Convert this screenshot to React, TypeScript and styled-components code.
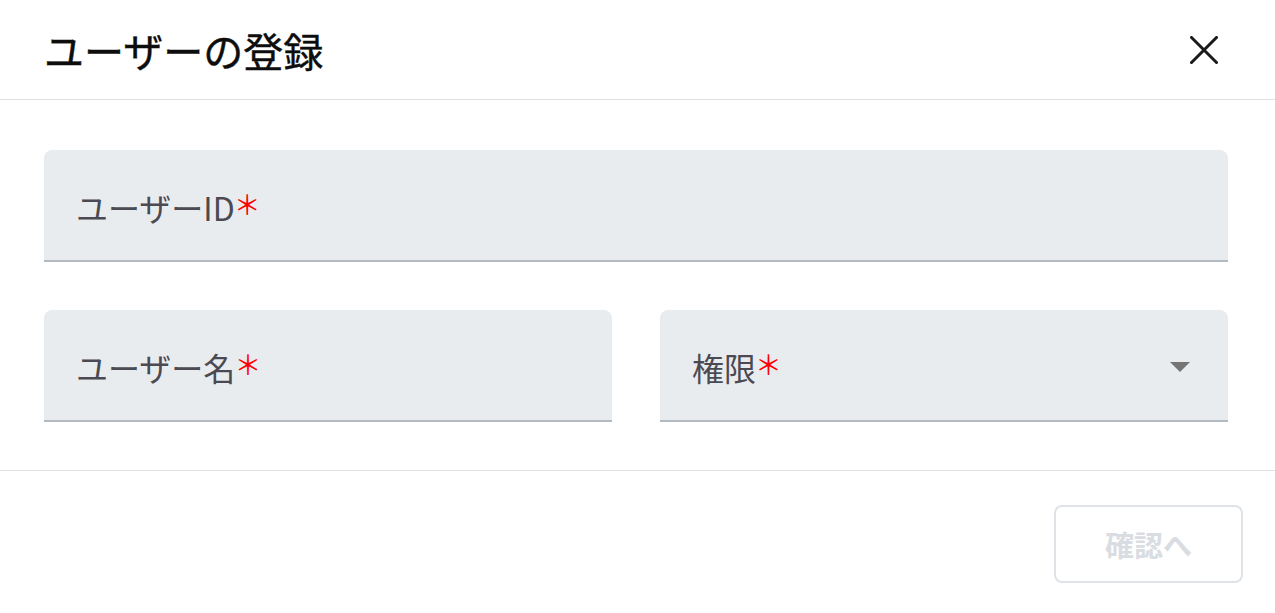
import React from "react";
import styled, { createGlobalStyle } from "styled-components";

const GlobalStyle = createGlobalStyle`
  html, body {
    margin: 0;
    padding: 0;
    background: #ffffff;
  }
  body {
    font-family: "Noto Sans CJK JP", "Noto Sans", sans-serif;
  }
`;

const Dialog = styled.div`
  width: 1275px;
  height: 613px;
  background: #ffffff;
  display: flex;
  flex-direction: column;
`;

const Header = styled.header`
  height: 100px;
  display: flex;
  align-items: center;
  justify-content: space-between;
  padding: 0 47px 0 44px;
  border-bottom: 1.5px solid #e0e0e0;
  box-sizing: border-box;
`;

const Title = styled.h2`
  margin: 0;
  font-size: 40px;
  font-weight: 400;
  color: #0d0d0d;
  letter-spacing: 0;
  -webkit-text-stroke: 0.4px #0d0d0d;
`;

const CloseButton = styled.button`
  width: 48px;
  height: 48px;
  border: none;
  background: transparent;
  padding: 0;
  display: flex;
  align-items: center;
  justify-content: center;
  cursor: pointer;
`;

const Body = styled.div`
  display: flex;
  flex-direction: column;
  gap: 48px;
  padding: 50px 47px 48px 44px;
  border-bottom: 1.5px solid #e0e0e0;
`;

const Row = styled.div`
  display: flex;
  gap: 48px;
`;

const Field = styled.div`
  flex: 1;
  min-width: 0;
  height: 112px;
  box-sizing: border-box;
  background: #e9ecef;
  border-radius: 8px 8px 0 0;
  border-bottom: 2px solid #b4bac1;
  display: flex;
  align-items: center;
  justify-content: space-between;
  padding: 4px 38px 0 32px;
`;

const Label = styled.span`
  font-size: 32px;
  color: #4b4a52;
  display: inline-flex;
  align-items: center;
`;

const Required = styled.span`
  color: #ff0000;
  font-size: 27px;
  margin-left: -1px;
  margin-bottom: 8px;
`;

const Caret = styled.span`
  width: 0;
  height: 0;
  border-left: 10px solid transparent;
  border-right: 10px solid transparent;
  border-top: 10px solid #757575;
`;

const Footer = styled.footer`
  display: flex;
  justify-content: flex-end;
  padding: 34px 32px 0 0;
`;

const ConfirmButton = styled.button`
  width: 189px;
  height: 78px;
  box-sizing: border-box;
  background: #ffffff;
  border: 2px solid #dfe3e7;
  border-radius: 8px;
  font-family: "Noto Sans CJK JP", "Noto Sans", sans-serif;
  font-size: 29px;
  font-weight: 700;
  color: #d9dde2;
`;

export default function App() {
  return (
    <>
      <GlobalStyle />
      <Dialog>
        <Header>
          <Title>ユーザーの登録</Title>
          <CloseButton aria-label="close">
            <svg width="28" height="28" viewBox="0 0 28 28">
              <path d="M1.5 1.5 L26.5 26.5 M26.5 1.5 L1.5 26.5" stroke="#1a1a1a" strokeWidth="3" strokeLinecap="square" />
            </svg>
          </CloseButton>
        </Header>
        <Body>
          <Row>
            <Field>
              <Label>
                ユーザーID<Required>＊</Required>
              </Label>
            </Field>
          </Row>
          <Row>
            <Field>
              <Label>
                ユーザー名<Required>＊</Required>
              </Label>
            </Field>
            <Field>
              <Label>
                権限<Required>＊</Required>
              </Label>
              <Caret />
            </Field>
          </Row>
        </Body>
        <Footer>
          <ConfirmButton disabled>確認へ</ConfirmButton>
        </Footer>
      </Dialog>
    </>
  );
}
